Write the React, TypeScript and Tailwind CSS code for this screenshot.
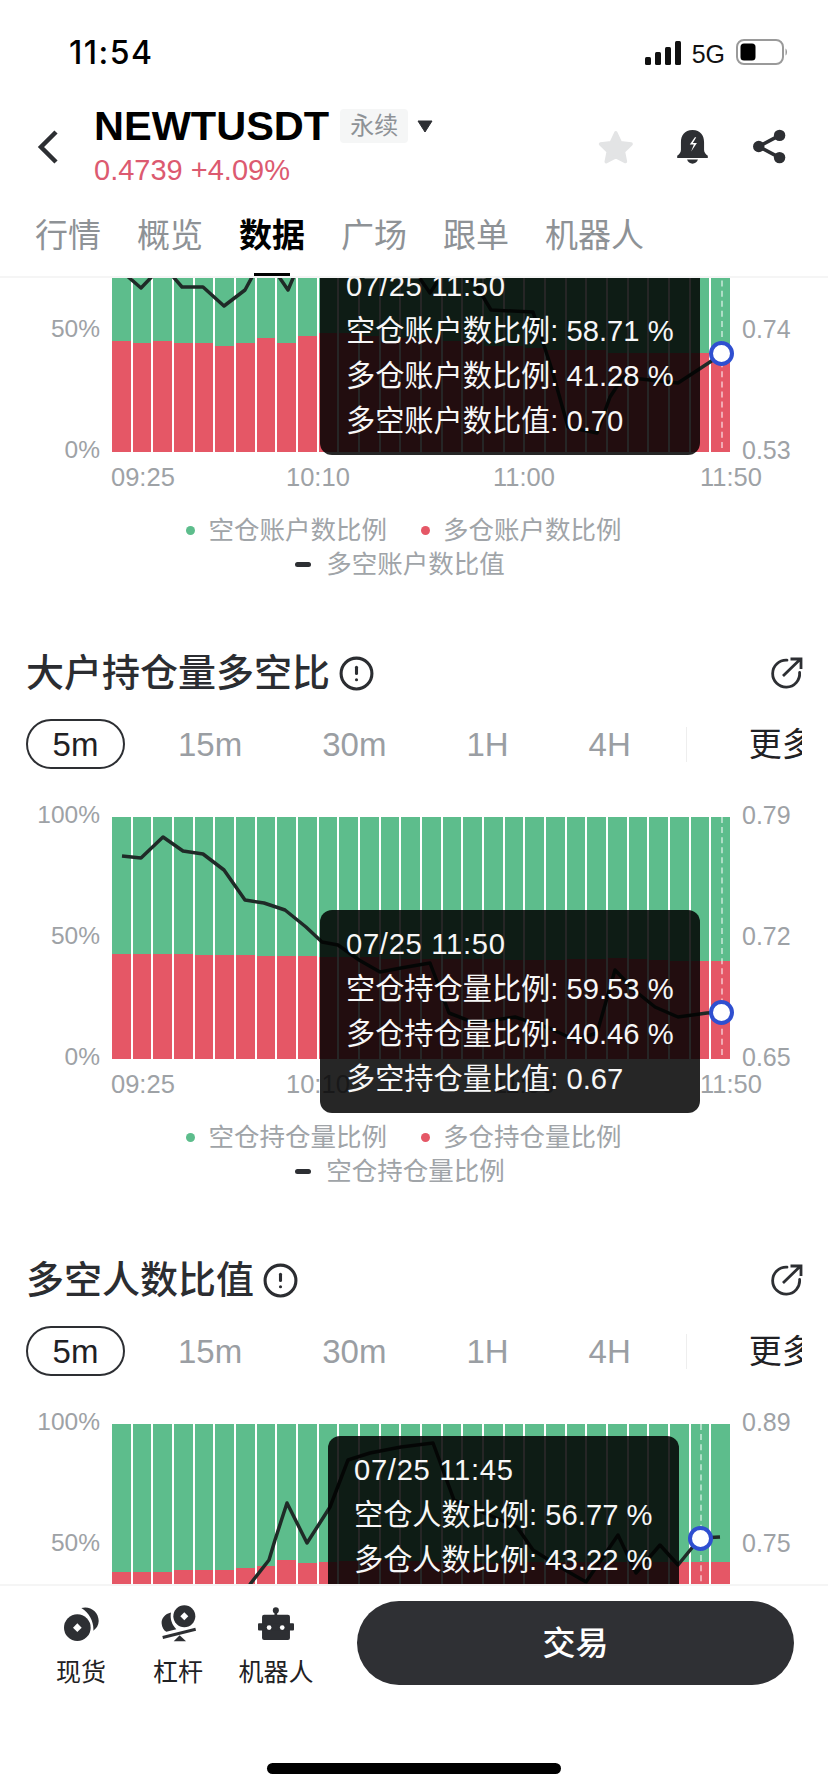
import { CircleAlert } from "lucide-react";

type Pt = [number, number];

const green = "bg-[#5dbd8c]";

const chartOneRed = [46, 45, 46, 45, 45, 44, 45, 47, 45, 48, 49, 49, 48, 46, 47, 47, 46, 46, 44, 44, 43, 42, 42, 42, 41, 41, 41, 41, 41, 41];
const chartTwoRed = [43.4, 43.5, 43.5, 43.4, 43, 42.9, 42.8, 42.6, 42.5, 42.4, 42.3, 42, 42, 41.5, 41.5, 41.5, 41.4, 41.3, 41.2, 41.1, 41.1, 41, 41.3, 41.5, 41.6, 41.4, 41, 40.7, 40.5, 40.5];
const chartThreeRed = [38.8, 38.8, 39, 39.7, 39.7, 39.7, 40.5, 41.3, 43.8, 42.6, 43, 43.5, 44, 44, 43.5, 43, 43, 42.5, 42.5, 43, 43, 43, 43, 43, 43, 43, 43, 43, 43, 43];

// line points are page coordinates read off the screenshot, plotTop shifts them into the plot
const chartOneLine: Pt[] = [[118, 268], [141, 288], [163, 265], [182, 287], [203, 287], [224, 306], [245, 290], [264, 255], [288, 290], [305, 250], [350, 240], [400, 250], [430, 293], [445, 270], [470, 275], [491, 310], [533, 312], [552, 370], [568, 427], [597, 433], [610, 397], [623, 377], [650, 380], [678, 383], [710, 362], [722, 353]];
const chartTwoLine: Pt[] = [[122, 856], [141, 858], [163, 837], [183, 851], [203, 854], [224, 870], [245, 900], [264, 903], [285, 910], [306, 927], [322, 942], [338, 945], [359, 960], [380, 972], [401, 968], [430, 963], [449, 1013], [475, 1023], [515, 1017], [549, 1028], [575, 1040], [597, 1033], [615, 970], [634, 990], [655, 1007], [678, 1017], [707, 1013], [722, 1012]];
const chartThreeLine: Pt[] = [[240, 1600], [251, 1583], [269, 1560], [275, 1540], [287, 1503], [307, 1543], [330, 1507], [348, 1460], [370, 1453], [401, 1447], [433, 1443], [454, 1500], [517, 1527], [533, 1550], [560, 1567], [586, 1582], [618, 1535], [636, 1573], [660, 1545], [678, 1565], [700, 1538], [720, 1537]];

function StatusBar() {
    return (
        <div className="flex h-[100px] items-start pl-[69px] pr-[40px] pt-[34px]">
            <span className="font-['Inter',sans-serif] text-[32px] font-medium leading-[38px] tracking-[1.5px] text-black">11:54</span>
            <svg className="ml-auto mt-[7px]" width="36" height="24" viewBox="0 0 36 24">
                <rect x="0" y="16" width="6" height="8" rx="1.5" fill="#111" />
                <rect x="10" y="11" width="6" height="13" rx="1.5" fill="#111" />
                <rect x="20" y="6" width="6" height="18" rx="1.5" fill="#111" />
                <rect x="30" y="0" width="6" height="24" rx="1.5" fill="#111" />
            </svg>
            <span className="ml-[11px] mt-[1px] text-[25px] font-medium leading-[38px] text-[#111]">5G</span>
            <svg className="ml-[11px] mt-[5px]" width="52" height="26" viewBox="0 0 52 26">
                <rect x="1" y="1" width="46" height="24" rx="7" fill="none" stroke="#9a9a9a" strokeWidth="2" />
                <rect x="4.5" y="4.5" width="15" height="17" rx="3.5" fill="#000" />
                <path d="M49.5 9.5c2 1 2 6 0 7z" fill="#9a9a9a" />
            </svg>
        </div>
    );
}

function BellIcon() {
    return (
        <svg width="31" height="34" viewBox="350 90 90 100">
            <path d="M395 90c-24 0-34 17-34 36v22c0 8-4 12-11 18v6h90v-6c-7-6-11-10-11-18v-22c0-19-10-36-34-36z" fill="#2d2f33" />
            <path d="M402 111l-15 22h12l-8 20 17-25h-12l10-17z" fill="#fff" />
            <path d="M379 177h32c-2 8-9 12-16 12s-14-4-16-12z" fill="#2d2f33" />
        </svg>
    );
}

function ShareIcon() {
    return (
        <svg width="37" height="37" viewBox="570 85 110 110">
            <path d="M655 107L593 140L655 173" fill="none" stroke="#2d2f33" strokeWidth="11" />
            <circle cx="655" cy="107" r="17" fill="#2d2f33" />
            <circle cx="593" cy="140" r="17" fill="#2d2f33" />
            <circle cx="655" cy="173" r="17" fill="#2d2f33" />
        </svg>
    );
}

function TitleRow() {
    return (
        <div className="flex h-[110px] items-start pl-[37px]">
            <svg className="mt-[29px]" width="22" height="36" viewBox="0 0 22 36">
                <path d="M19 3L4 18l15 15" fill="none" stroke="#2d2f33" strokeWidth="4.5" />
            </svg>
            <div className="ml-[35px] flex flex-col pt-[4px]">
                <div className="flex h-[44px] items-center">
                    <span className="text-[41.5px] font-bold leading-[44px] text-black">NEWTUSDT</span>
                    <span className="ml-[11px] flex h-[34px] w-[68px] items-center justify-center rounded-[4px] bg-[#f5f6f6] text-[24px] text-[#8e9296]">永续</span>
                    <svg className="ml-[9px]" width="16" height="13" viewBox="0 0 16 13">
                        <path d="M1 1h14L8 12z" fill="#2d2f33" stroke="#2d2f33" strokeLinejoin="round" />
                    </svg>
                </div>
                <span className="mt-[5px] text-[29px] leading-[34px] text-[#dc5a70]">0.4739 +4.09%</span>
            </div>
            <div className="ml-auto mr-[40px] mt-[28px] flex items-center">
                <svg width="36" height="34" viewBox="113 90 107 102">
                    <path d="M166 98l14 30 32 4-23 23 6 30-29-15-29 15 6-30-23-23 32-4z" fill="#e3e4e5" stroke="#e3e4e5" strokeWidth="10" strokeLinejoin="round" />
                </svg>
                <div className="ml-[43px]"><BellIcon /></div>
                <div className="ml-[43px]"><ShareIcon /></div>
            </div>
        </div>
    );
}

function TopTabs() {
    const tabs = ["行情", "概览", "数据", "广场", "跟单", "机器人"];
    return (
        <div className="flex h-[66px] gap-[36px] pl-[35px]">
            {tabs.map((tab) => (
                <div key={tab} className="relative h-[66px] pt-[2px]">
                    <span className={tab === "数据" ? "text-[33px] font-semibold leading-[48px] text-black" : "text-[33px] leading-[48px] text-[#8e9296]"}>{tab}</span>
                    {tab === "数据" && <div className="absolute bottom-0 left-[15px] h-[3px] w-[36px] bg-black" />}
                </div>
            ))}
        </div>
    );
}

function ChartLine({ points, plotTop }: { points: Pt[]; plotTop: number }) {
    const shifted = points.map(([x, y]) => `${x - 112},${y - plotTop}`).join(" ");
    return (
        <svg className="absolute inset-0 h-full w-full overflow-visible" viewBox="0 0 618 242">
            <polyline points={shifted} fill="none" stroke="#1f2a27" strokeWidth="3.5" strokeLinejoin="round" />
        </svg>
    );
}

function Tooltip({ className, lines }: { className: string; lines: string[] }) {
    return (
        <div className={`absolute h-[203px] rounded-[12px] bg-black/85 pl-[26px] pt-[12px] text-[29.2px] leading-[45px] text-[#f7f7f7] ${className}`}>
            {lines.map((line, i) => (
                <div key={line} className={i === 0 ? "tracking-[0.7px]" : ""}>{line}</div>
            ))}
        </div>
    );
}

type ChartProps = {
    red: number[];
    line: Pt[];
    plotTop: number;
    yLeft: string[];
    yRight: string[];
    tooltipClass: string;
    tooltip: string[];
    cursorClass: string;
    markerClass: string;
    legend: string[];
};

function Chart({ red, line, plotTop, yLeft, yRight, tooltipClass, tooltip, cursorClass, markerClass, legend }: ChartProps) {
    return (
        <div>
            <div className="flex h-[242px] items-start">
                <div className="-mt-[17px] flex h-[272px] w-[100px] flex-col justify-between text-right text-[24.5px] leading-[30px] text-[#9ea2a6]">
                    {yLeft.map((v) => <span key={v}>{v}</span>)}
                </div>
                <div className="relative ml-[12px] h-[242px] w-[618px]">
                    <div className="flex h-full gap-[2px]">
                        {red.map((r, i) => (
                            <div key={i} className={`flex h-full flex-1 flex-col justify-end ${green}`}>
                                <div className="bg-[#e55766]" style={{ height: `${r}%` }} />
                            </div>
                        ))}
                    </div>
                    <div className={`absolute -bottom-[6px] top-0 border-l-2 border-dashed border-white/50 ${cursorClass}`} />
                    <ChartLine points={line} plotTop={plotTop} />
                    <Tooltip className={tooltipClass} lines={tooltip} />
                    <div className={`absolute h-[25px] w-[25px] rounded-full border-[4px] border-[#2f4fd0] bg-white ${markerClass}`} />
                </div>
                <div className="-mt-[17px] ml-[12px] flex h-[272px] flex-col justify-between text-[25px] leading-[30px] text-[#9ea2a6]">
                    {yRight.map((v) => <span key={v}>{v}</span>)}
                </div>
            </div>
            <div className="ml-[111px] mt-[10px] flex h-[30px] text-[25.5px] leading-[30px] text-[#9ea2a6]">
                <span className="w-[175px]">09:25</span>
                <span className="w-[207px]">10:10</span>
                <span className="w-[207px]">11:00</span>
                <span>11:50</span>
            </div>
            <div className="mt-[21px] flex w-[802px] flex-col items-center text-[25.5px] leading-[34px] text-[#a0a4a8]">
                <div className="ml-[6px] flex items-center">
                    <div className="h-[9px] w-[9px] rounded-full bg-[#5dbd8c]" />
                    <span className="ml-[13px]">{legend[0]}</span>
                    <div className="ml-[34px] h-[9px] w-[9px] rounded-full bg-[#e55766]" />
                    <span className="ml-[13px]">{legend[1]}</span>
                </div>
                <div className="-ml-[2px] flex items-center">
                    <div className="h-[5px] w-[16px] rounded-full bg-[#2d2f33]" />
                    <span className="ml-[15px]">{legend[2]}</span>
                </div>
            </div>
        </div>
    );
}

function ExportIcon() {
    return (
        <svg width="33" height="32" viewBox="0 0 33 32" className="shrink-0">
            <path d="M17 3.2A13.5 13.5 0 1 0 29.6 15.5" fill="none" stroke="#2d2f33" strokeWidth="2.8" strokeLinecap="round" />
            <path d="M13 19L30 2.5M20.5 2h10.5v10" fill="none" stroke="#2d2f33" strokeWidth="2.8" />
        </svg>
    );
}

function SectionHeader({ title }: { title: string }) {
    return (
        <div className="flex h-[50px] w-[803px] items-center pl-[26px]">
            <span className="text-[38px] font-medium leading-[50px] text-[#2b2d31]">{title}</span>
            <CircleAlert className="ml-[8px]" size={37} strokeWidth={2} color="#2b2d31" />
            <div className="ml-auto"><ExportIcon /></div>
        </div>
    );
}

function RangeTabs() {
    return (
        <div className="ml-[26px] mt-[21px] flex h-[50px] w-[776px] items-center overflow-hidden text-[33px] text-[#9a9ea3]">
            <div className="flex h-[50px] w-[99px] shrink-0 items-center justify-center rounded-[25px] border-2 border-[#2d2f33] pt-[2px] text-[#1f2124]">5m</div>
            <div className="ml-[53px] flex shrink-0 gap-[80px] pt-[2px]">
                <span>15m</span>
                <span>30m</span>
                <span>1H</span>
                <span>4H</span>
            </div>
            <div className="ml-[55px] h-[35px] w-[1px] shrink-0 bg-[#eeeeee]" />
            <span className="ml-[62px] shrink-0 pt-[2px] text-[#1f2124]">更多</span>
        </div>
    );
}

function BottomIcons({ name }: { name: string }) {
    if (name === "现货") {
        return (
            <svg width="35" height="35" viewBox="0 0 105 105">
                <path d="M52 6C78-2 105 18 104 46c0 12-7 22-16 28 2-24-10-52-36-68z" fill="#2d2f33" />
                <circle cx="40" cy="65" r="40" fill="#2d2f33" />
                <path d="M40 52l13 13-13 13-13-13z" fill="#fff" />
            </svg>
        );
    }
    if (name === "杠杆") {
        return (
            <svg width="35" height="37" viewBox="0 0 105 110">
                <circle cx="70" cy="33" r="33" fill="#2d2f33" />
                <path d="M70 21l12 12-12 12-12-12z" fill="#fff" />
                <path d="M30 22C12 26 0 40 2 56c1 10 6 20 14 24l30-8C34 60 26 42 30 22z" fill="#2d2f33" />
                <path d="M5 97l99-25" stroke="#2d2f33" strokeWidth="9" />
                <path d="M38 108h37l-19-18z" fill="#2d2f33" />
            </svg>
        );
    }
    return (
        <svg width="36" height="33" viewBox="0 0 107 98">
            <circle cx="53" cy="10" r="9" fill="#2d2f33" />
            <rect x="49" y="10" width="8" height="16" fill="#2d2f33" />
            <rect x="12" y="23" width="83" height="75" rx="6" fill="#2d2f33" />
            <rect x="0" y="48" width="107" height="22" rx="3" fill="#2d2f33" />
            <circle cx="33" cy="61" r="7" fill="#fff" />
            <circle cx="72" cy="61" r="7" fill="#fff" />
        </svg>
    );
}

function BottomBar() {
    const items = [
        { name: "现货", className: "w-[50px] ml-[56px]" },
        { name: "杠杆", className: "w-[50px] ml-[47px]" },
        { name: "机器人", className: "w-[76px] ml-[35px]" },
    ];
    return (
        <div className="h-[208px] shrink-0 border-t-2 border-[#f5f5f5] bg-white">
            <div className="flex items-start pt-[15px]">
                {items.map((item) => (
                    <div key={item.name} className={`flex shrink-0 flex-col items-center ${item.className}`}>
                        <div className="flex h-[45px] items-center justify-center"><BottomIcons name={item.name} /></div>
                        <span className="mt-[9px] whitespace-nowrap text-[25px] leading-[34px] text-[#1f2124]">{item.name}</span>
                    </div>
                ))}
                <button className="ml-[43px] h-[84px] w-[437px] rounded-full bg-[#2f3034] pt-[2px] text-[33px] font-medium text-white">交易</button>
            </div>
            <div className="mx-auto mt-[74px] h-[11px] w-[294px] rounded-full bg-black" />
        </div>
    );
}

export default function App() {
    return (
        <main className="flex h-[1792px] w-[828px] flex-col overflow-hidden bg-white font-['Liberation_Sans','Noto_Sans_CJK_SC',sans-serif]">
            <header className="relative z-10 h-[278px] shrink-0 border-b-2 border-[#f5f5f5] bg-white">
                <StatusBar />
                <TitleRow />
                <TopTabs />
            </header>
            <div className="min-h-0 flex-1 overflow-hidden">
                <div className="-mt-[68px]">
                    <Chart
                        red={chartOneRed}
                        line={chartOneLine}
                        plotTop={210}
                        yLeft={["100%", "50%", "0%"]}
                        yRight={["0.95", "0.74", "0.53"]}
                        tooltipClass="left-[208px] top-[42px] w-[380px]"
                        tooltip={["07/25 11:50", "空仓账户数比例: 58.71 %", "多仓账户数比例: 41.28 %", "多空账户数比值: 0.70"]}
                        cursorClass="left-[609px]"
                        markerClass="left-[597px] top-[131px]"
                        legend={["空仓账户数比例", "多仓账户数比例", "多空账户数比值"]}
                    />
                    <div className="mt-[67px]">
                        <SectionHeader title="大户持仓量多空比" />
                        <RangeTabs />
                    </div>
                    <div className="mt-[48px]">
                        <Chart
                            red={chartTwoRed}
                            line={chartTwoLine}
                            plotTop={817}
                            yLeft={["100%", "50%", "0%"]}
                            yRight={["0.79", "0.72", "0.65"]}
                            tooltipClass="left-[208px] top-[93px] w-[380px]"
                            tooltip={["07/25 11:50", "空仓持仓量比例: 59.53 %", "多仓持仓量比例: 40.46 %", "多空持仓量比值: 0.67"]}
                            cursorClass="left-[609px]"
                            markerClass="left-[597px] top-[183px]"
                            legend={["空仓持仓量比例", "多仓持仓量比例", "空仓持仓量比例"]}
                        />
                    </div>
                    <div className="mt-[67px]">
                        <SectionHeader title="多空人数比值" />
                        <RangeTabs />
                    </div>
                    <div className="mt-[48px]">
                        <Chart
                            red={chartThreeRed}
                            line={chartThreeLine}
                            plotTop={1424}
                            yLeft={["100%", "50%", "0%"]}
                            yRight={["0.89", "0.75", "0.61"]}
                            tooltipClass="left-[216px] top-[12px] w-[351px]"
                            tooltip={["07/25 11:45", "空仓人数比例: 56.77 %", "多仓人数比例: 43.22 %", "多空人数比值: 0.76"]}
                            cursorClass="left-[588px]"
                            markerClass="left-[576px] top-[102px]"
                            legend={["空仓人数比例", "多仓人数比例", "多空人数比值"]}
                        />
                    </div>
                </div>
            </div>
            <BottomBar />
        </main>
    );
}
